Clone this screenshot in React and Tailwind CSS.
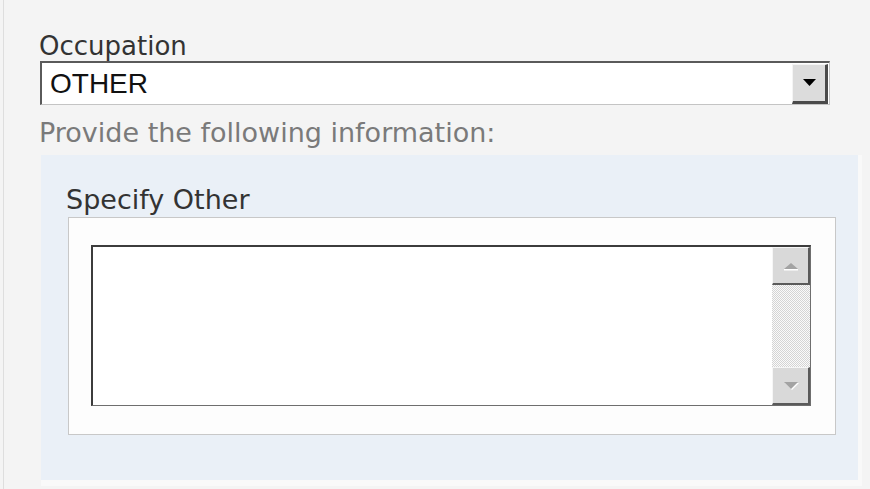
import React from "react";

const sans = { fontFamily: '"DejaVu Sans", Verdana, sans-serif' };

function ArrowBtn({ dir }) {
  return (
    <div className="h-[38px] w-full bg-[#d9d9d9] border-t border-l border-t-[#f6f6f6] border-l-[#f6f6f6] border-b-2 border-r-2 border-b-[#5a5a5a] border-r-[#5a5a5a] flex items-center justify-center">
      <svg width="18" height="12" viewBox="0 0 18 12">
        {dir === "up" ? (
          <>
            <rect x="2" y="9" width="14" height="1.5" fill="#ffffff" />
            <polygon points="2,9 16,9 9,3" fill="#a3a3a3" />
          </>
        ) : (
          <>
            <polygon points="3,3 17,3 10,10" fill="#ffffff" />
            <polygon points="2,2 16,2 9,9" fill="#a3a3a3" />
          </>
        )}
      </svg>
    </div>
  );
}

export default function App() {
  return (
    <div className="w-[870px] h-[489px] bg-[#f4f4f4] overflow-hidden" style={sans}>
      <div className="ml-[3px] h-full border-l border-[#dedede] pl-[35px] pt-[32px]">
        <div className="text-[26px] leading-[29px] text-[#333333]">Occupation</div>
        <div className="ml-[1px] w-[790px] h-[44px] bg-white border-t-2 border-l-2 border-t-[#5a5a5a] border-l-[#5a5a5a] border-b border-r border-b-[#c4c4c4] border-r-[#c4c4c4] flex items-center justify-between">
          <span
            className="pl-[8px] text-[28px] leading-[30px] text-[#111111]"
            style={{ fontFamily: '"Liberation Sans", Arial, sans-serif' }}
          >
            OTHER
          </span>
          <div className="mr-[1px] w-[36px] h-[40px] bg-[#dcdcdc] border-t border-l border-t-[#f4f4f4] border-l-[#f4f4f4] border-b-[3px] border-r-[3px] border-b-[#4a4a4a] border-r-[#4a4a4a] flex items-center justify-center">
            <svg width="13" height="7" viewBox="0 0 13 7">
              <polygon points="0,0 13,0 6.5,7" fill="#000000" />
            </svg>
          </div>
        </div>
        <div className="mt-[13px] text-[27px] leading-[30px] text-[#7a7a7a]">
          Provide the following information:
        </div>
        <div className="mt-[7px] ml-[2px] w-[821px] h-[331px] bg-[#eaf0f7] border-r-4 border-b-[6px] border-[#f9f9f9] pl-[25px] pt-[30px]">
          <div className="text-[27px] leading-[29px] text-[#333333]">Specify Other</div>
          <div className="mt-[3px] ml-[2px] w-[768px] h-[218px] bg-[#fdfdfd] border border-[#c8c8c8] pl-[22px] pt-[27px]">
            <div className="w-[720px] h-[161px] bg-white border-t-2 border-l-2 border-t-[#3c3c3c] border-l-[#3c3c3c] border-b border-r border-b-[#6e6e6e] border-r-[#6e6e6e] flex justify-end">
              <div className="w-[38px] h-full flex flex-col">
                <ArrowBtn dir="up" />
                <div className="flex-1 bg-[repeating-conic-gradient(#d4d4d4_0_25%,#fafafa_0_50%)] bg-size-[2px_2px]" />
                <ArrowBtn dir="down" />
              </div>
            </div>
          </div>
        </div>
      </div>
    </div>
  );
}
